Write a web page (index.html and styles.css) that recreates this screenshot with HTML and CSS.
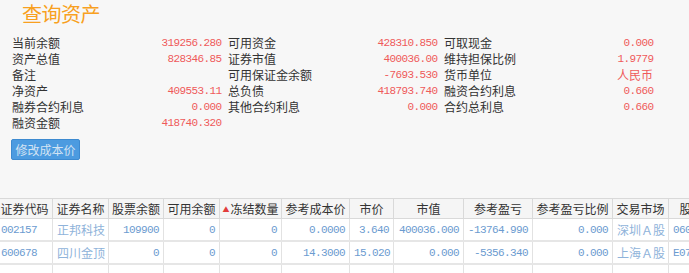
FILE: index.html
```html
<!DOCTYPE html>
<html lang="zh-CN">
<head>
<meta charset="utf-8">
<title>查询资产</title>
<link rel="stylesheet" href="styles.css">
</head>
<body>
<div class="page">
  <h1 class="title">查询资产</h1>
  <div class="info">
    <div class="item"><span class="lbl">当前余额</span><span class="val">319256.280</span></div>
    <div class="item"><span class="lbl">可用资金</span><span class="val">428310.850</span></div>
    <div class="item"><span class="lbl">可取现金</span><span class="val">0.000</span></div>
    <div class="item"><span class="lbl">资产总值</span><span class="val">828346.85</span></div>
    <div class="item"><span class="lbl">证券市值</span><span class="val">400036.00</span></div>
    <div class="item"><span class="lbl">维持担保比例</span><span class="val">1.9779</span></div>
    <div class="item"><span class="lbl">备注</span><span class="val"></span></div>
    <div class="item"><span class="lbl">可用保证金余额</span><span class="val">-7693.530</span></div>
    <div class="item"><span class="lbl">货币单位</span><span class="val cjk">人民币</span></div>
    <div class="item"><span class="lbl">净资产</span><span class="val">409553.11</span></div>
    <div class="item"><span class="lbl">总负债</span><span class="val">418793.740</span></div>
    <div class="item"><span class="lbl">融资合约利息</span><span class="val">0.660</span></div>
    <div class="item"><span class="lbl">融券合约利息</span><span class="val">0.000</span></div>
    <div class="item"><span class="lbl">其他合约利息</span><span class="val">0.000</span></div>
    <div class="item"><span class="lbl">合约总利息</span><span class="val">0.660</span></div>
    <div class="item"><span class="lbl">融资金额</span><span class="val">418740.320</span></div>
  </div>
  <button class="btn" type="button">修改成本价</button>
  <div class="table-wrap">
    <table class="grid">
      <colgroup>
        <col style="width:56px"><col style="width:56px"><col style="width:55px"><col style="width:56px">
        <col style="width:62px"><col style="width:68px"><col style="width:44px"><col style="width:70px">
        <col style="width:69px"><col style="width:80px"><col style="width:56px"><col style="width:70px">
      </colgroup>
      <thead>
        <tr>
          <th>证券代码</th><th>证券名称</th><th>股票余额</th><th>可用余额</th>
          <th><span class="sort">▲</span>冻结数量</th><th>参考成本价</th><th>市价</th><th>市值</th>
          <th>参考盈亏</th><th>参考盈亏比例</th><th>交易市场</th><th>股东代码</th>
        </tr>
      </thead>
      <tbody>
        <tr>
          <td class="num left">002157</td><td class="cjk">正邦科技</td><td class="num">109900</td><td class="num">0</td>
          <td class="num">0</td><td class="num">0.0000</td><td class="num">3.640</td><td class="num">400036.000</td>
          <td class="num">-13764.990</td><td class="num">0.000</td><td class="cjk">深圳Ａ股</td><td class="num left">0600000001</td>
        </tr>
        <tr>
          <td class="num left">600678</td><td class="cjk">四川金顶</td><td class="num">0</td><td class="num">0</td>
          <td class="num">0</td><td class="num">14.3000</td><td class="num">15.020</td><td class="num">0.000</td>
          <td class="num">-5356.340</td><td class="num">0.000</td><td class="cjk">上海Ａ股</td><td class="num left">E070000001</td>
        </tr>
        <tr class="empty">
          <td></td><td></td><td></td><td></td><td></td><td></td><td></td><td></td><td></td><td></td><td></td><td></td>
        </tr>
      </tbody>
    </table>
  </div>
</div>
</body>
</html>
```

FILE: styles.css
```css
html, body {
  margin: 0;
  padding: 0;
  background: #f7f7f7;
  overflow: hidden;
}

.page {
  font-family: "Noto Sans CJK SC", "Noto Sans", sans-serif;
  font-size: 12px;
  color: #333;
  width: 689px;
  height: 273px;
  overflow: hidden;
}

.title {
  margin: 0;
  padding: 2px 0 0 22px;
  height: 33px;
  box-sizing: border-box;
  font-size: 20px;
  line-height: 24px;
  font-weight: normal;
  color: #f8a020;
  letter-spacing: -0.5px;
}

.info {
  display: grid;
  grid-template-columns: repeat(3, 216px);
  padding-left: 12px;
  margin-top: 2px;
}

.item {
  display: flex;
  justify-content: space-between;
  align-items: center;
  height: 16px;
  padding-right: 7px;
}

.lbl {
  color: #333;
  line-height: 16px;
}

.val {
  font-family: "Liberation Mono", monospace;
  font-size: 11px;
  letter-spacing: -0.6px;
  margin-right: -0.6px;
  color: #ef5a5a;
  line-height: 16px;
}

.val.cjk {
  font-family: "Noto Sans CJK SC", sans-serif;
  font-size: 12px;
  letter-spacing: 0;
  margin-right: 0;
}

.btn {
  display: block;
  margin: 8px 0 0 11px;
  height: 21px;
  width: 69px;
  padding: 0;
  border: 1px solid #3d8ad0;
  border-radius: 2px;
  background: #4c9be0;
  color: #d3e3f3;
  font-family: "Noto Sans CJK SC", sans-serif;
  font-size: 12px;
  line-height: 19px;
}

.table-wrap {
  margin-top: 38px;
  margin-left: -4px;
}

.grid {
  table-layout: fixed;
  border-collapse: collapse;
  width: 742px;
}

.grid th {
  height: 19px;
  padding: 0;
  font-weight: normal;
  color: #333;
  background: #f5f5f5;
  border: 1px solid #d9d9d9;
  text-align: center;
  white-space: nowrap;
  overflow: hidden;
  line-height: 18px;
}

.sort {
  color: #e23c3c;
  font-size: 7px;
  vertical-align: 2px;
  margin-right: 1px;
}

.grid td {
  height: 21px;
  padding: 0 4px;
  background: #fff;
  border-left: 1px solid #e2e2e2;
  border-right: 1px solid #e2e2e2;
  border-bottom: 2px solid #e6e6e6;
  color: #6b9bd0;
  white-space: nowrap;
  overflow: hidden;
  line-height: 20px;
}

.grid td.num {
  font-family: "Liberation Mono", monospace;
  font-size: 11px;
  letter-spacing: -0.6px;
  text-align: right;
}

.grid td.left {
  text-align: left;
}

.grid td.cjk {
  font-size: 12px;
  text-align: left;
  color: #8fb3da;
}
```
